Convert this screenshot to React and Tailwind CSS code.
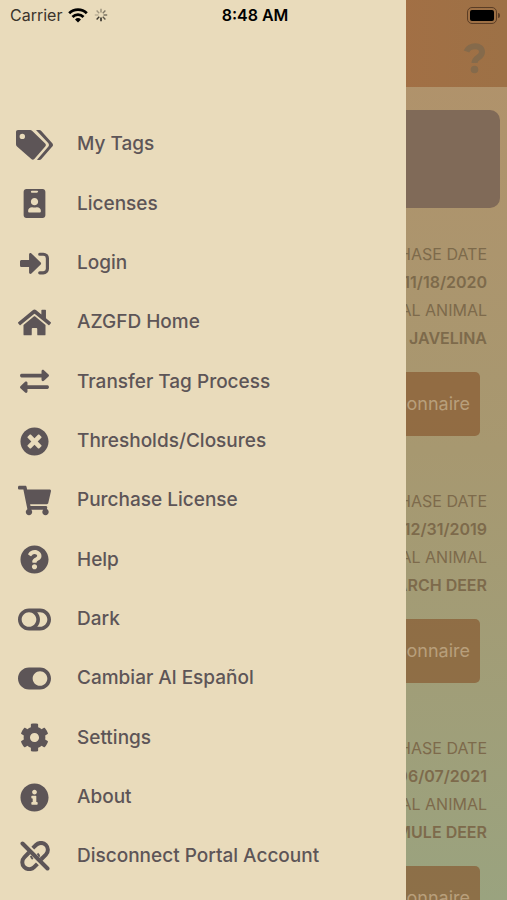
import React from 'react';
import {
  FaIdBadge,
  FaHome,
  FaTimesCircle,
  FaShoppingCart,
  FaQuestionCircle,
  FaToggleOff,
  FaToggleOn,
  FaCog,
  FaInfoCircle,
} from 'react-icons/fa';

const TagsIcon = () => (
  <svg viewBox="0 0 37 30" fill="currentColor" className="h-[30px] w-[37px]">
    <path
      fillRule="evenodd"
      d="M2 0h11.5c1.200 0 2 .3 2.800 1.100L29.200 13.500c.9.9.9 2.100 0 3L18.300 29.100c-.9.9-2.100.9-3 0L1 16.500c-.7-.7-1-1.400-1-2.300V2C0 .8.8 0 2 0zm4.300 3.700a2.700 2.700 0 1 0 0 5.400 2.700 2.700 0 0 0 0-5.400z"
    />
    <path d="M20 0h3.200c.9 0 1.500.3 2.100.9l11 12.300c.9 1 .9 2.400 0 3.400L25.400 29c-.8.9-2.500 1.200-4.400.7L32.200 16.800c1-1.100 1-2.600 0-3.700z" />
  </svg>
);

const LoginIcon = () => (
  <svg viewBox="0 0 512 512" fill="currentColor" className="h-[29px] w-[29px]">
    <path d="M28 194h132V96c0-24 26-34 42-18l164 162c9 9 9 23 0 32L202 434c-16 16-42 6-42-18v-98H28c-15 0-28-12-28-28v-68c0-16 13-28 28-28z" />
    <path
      d="M348 92h64c40 0 72 32 72 72v184c0 40-32 72-72 72h-64"
      fill="none"
      stroke="currentColor"
      strokeWidth="56"
      strokeLinecap="round"
    />
  </svg>
);

const TransferIcon = () => (
  <svg viewBox="0 0 512 512" fill="currentColor" className="h-[29px] w-[29px]">
    <path d="M28 118h352V74c0-24 26-34 42-18l82 76c10 10 10 24 0 34l-82 78c-16 16-42 6-42-18v-42H28c-36 0-36-66 0-66z" />
    <path d="M484 322H132v-42c0-24-26-34-42-18L8 340c-10 10-10 24 0 34l82 78c16 16 42 6 42-18v-46h352c36 0 36-66 0-66z" />
  </svg>
);

const UnlinkIcon = () => (
  <svg viewBox="0 0 30 30" fill="none" stroke="currentColor" strokeWidth="4" className="h-[30px] w-[30px]">
    <path d="M2.500 2.500 27.500 27.500" strokeLinecap="round" />
    <path d="M12.800 7.200 16 4a6.900 6.900 0 0 1 9.900 9.700L21 18.500" />
    <path d="M9 11.500 4.300 16.300a6.900 6.900 0 0 0 9.800 9.800L17.400 22.800" />
    <path d="M17.500 12.500c1 .8 1.700 1.900 1.800 3.300" strokeWidth="2" />
    <path d="M11 14.800c.2 1.300.8 2.300 1.800 3.200" strokeWidth="2" />
  </svg>
);

const menuItems = [
  { label: 'My Tags', icon: <TagsIcon /> },
  { label: 'Licenses', icon: <FaIdBadge size={29} /> },
  { label: 'Login', icon: <LoginIcon /> },
  { label: 'AZGFD Home', icon: <FaHome size={33} /> },
  { label: 'Transfer Tag Process', icon: <TransferIcon /> },
  { label: 'Thresholds/Closures', icon: <FaTimesCircle size={29} /> },
  { label: 'Purchase License', icon: <FaShoppingCart size={33} /> },
  { label: 'Help', icon: <FaQuestionCircle size={29} /> },
  { label: 'Dark', icon: <FaToggleOff size={33} /> },
  { label: 'Cambiar Al Español', icon: <FaToggleOn size={33} /> },
  { label: 'Settings', icon: <FaCog size={29} /> },
  { label: 'About', icon: <FaInfoCircle size={29} /> },
  { label: 'Disconnect Portal Account', icon: <UnlinkIcon /> },
];

const tags = [
  { date: '11/18/2020', animal: 'JAVELINA' },
  { date: '12/31/2019', animal: 'ARCH DEER' },
  { date: '06/07/2021', animal: 'MULE DEER' },
];

const spokes = [
  { angle: 0, opacity: 0.35 },
  { angle: 45, opacity: 0.45 },
  { angle: 90, opacity: 0.5 },
  { angle: 135, opacity: 0.6 },
  { angle: 180, opacity: 0.9 },
  { angle: 225, opacity: 0.75 },
  { angle: 270, opacity: 0.2 },
  { angle: 315, opacity: 0.3 },
];

const StatusBar = () => (
  <div className="absolute inset-x-0 top-0 grid h-[30px] grid-cols-3 items-center pr-[7px] pl-[10px] text-black">
    <div className="flex items-center gap-[6px]">
      <span className="text-[16px] text-[#3b342b]">Carrier</span>
      <svg viewBox="0 0 20 15" className="h-[15px] w-5" fill="none" stroke="currentColor" strokeWidth="2.800">
        <path d="M1.200 5.300a12.500 12.500 0 0 1 17.600 0" />
        <path d="M4.500 8.900a7.800 7.800 0 0 1 11 0" />
        <path d="M10 14.500 7 11.400a4.300 4.300 0 0 1 6 0z" fill="currentColor" stroke="none" />
      </svg>
      <svg viewBox="0 0 14 14" className="h-[14px] w-[14px]" stroke="currentColor" strokeWidth="1.400">
        {spokes.map(({ angle, opacity }) => (
          <path key={angle} d="M7 4.500V.8" opacity={opacity} transform={`rotate(${angle} 7 7)`} />
        ))}
      </svg>
    </div>
    <span className="text-center text-[16px] font-semibold">8:48 AM</span>
    <div className="flex items-center justify-end gap-px">
      <div className="h-[17px] w-[30px] rounded-[5px] border border-[#5b3d25] p-[2px]">
        <div className="h-full rounded-[2px] bg-black" />
      </div>
      <div className="h-[5px] w-[2px] rounded-r-full bg-[#5b3d25]" />
    </div>
  </div>
);

const TagCard = ({ date, animal }) => (
  <article className="mb-[51px] flex flex-col items-end text-[16px] leading-7 text-[#7d6a4b]">
    <p className="pr-[13px]">PURCHASE DATE</p>
    <p className="pr-[13px] font-semibold">{date}</p>
    <p className="pr-[13px]">LEGAL ANIMAL</p>
    <p className="pr-[13px] font-semibold">{animal}</p>
    <button
      type="button"
      className="mt-5 mr-5 h-16 rounded-[5px] bg-[#85542b]/65 px-[10px] text-[18px] text-[#b89f7b]"
    >
      Questionnaire
    </button>
  </article>
);

const App = () => (
  <div className="relative h-screen overflow-hidden bg-linear-to-b from-[#b2916a] via-[#a79870] to-[#9aa37f] font-[Inter,'Liberation_Sans',sans-serif]">
    <main>
      <header className="flex h-[87px] justify-end bg-linear-to-r from-[#b4683f] to-[#9d7146] pt-[30px] pr-[20px]">
        <button type="button" aria-label="Help" className="h-14 text-[#856a4b]">
          <svg viewBox="0 0 24 32" className="h-8 w-6" fill="none" stroke="currentColor" strokeWidth="6">
            <path d="M3.500 9.500C6 3 19 2 19 10c0 6-7.500 5-7.500 11" />
            <circle cx="11.500" cy="27.500" r="3.800" fill="currentColor" stroke="none" />
          </svg>
        </button>
      </header>
      <div className="pt-[23px] pr-[7px]">
        <div className="mb-8 h-[98px] rounded-[10px] bg-[#806a58]" />
        {tags.map((tag) => (
          <TagCard key={tag.date} {...tag} />
        ))}
      </div>
    </main>

    <aside className="absolute inset-y-0 left-0 w-4/5 bg-[#e9dbbb]">
      <nav className="h-full pt-[115px] pb-[14px]">
        <ul className="flex h-full flex-col">
          {menuItems.map(({ label, icon }) => (
            <li key={label} className="flex-1">
              <a href="#" className="flex h-full items-center gap-6 pl-4 text-[19px] font-medium text-[#5d5557]">
                <span className="flex w-[37px] justify-center">{icon}</span>
                {label}
              </a>
            </li>
          ))}
        </ul>
      </nav>
    </aside>

    <StatusBar />
  </div>
);

export default App;
